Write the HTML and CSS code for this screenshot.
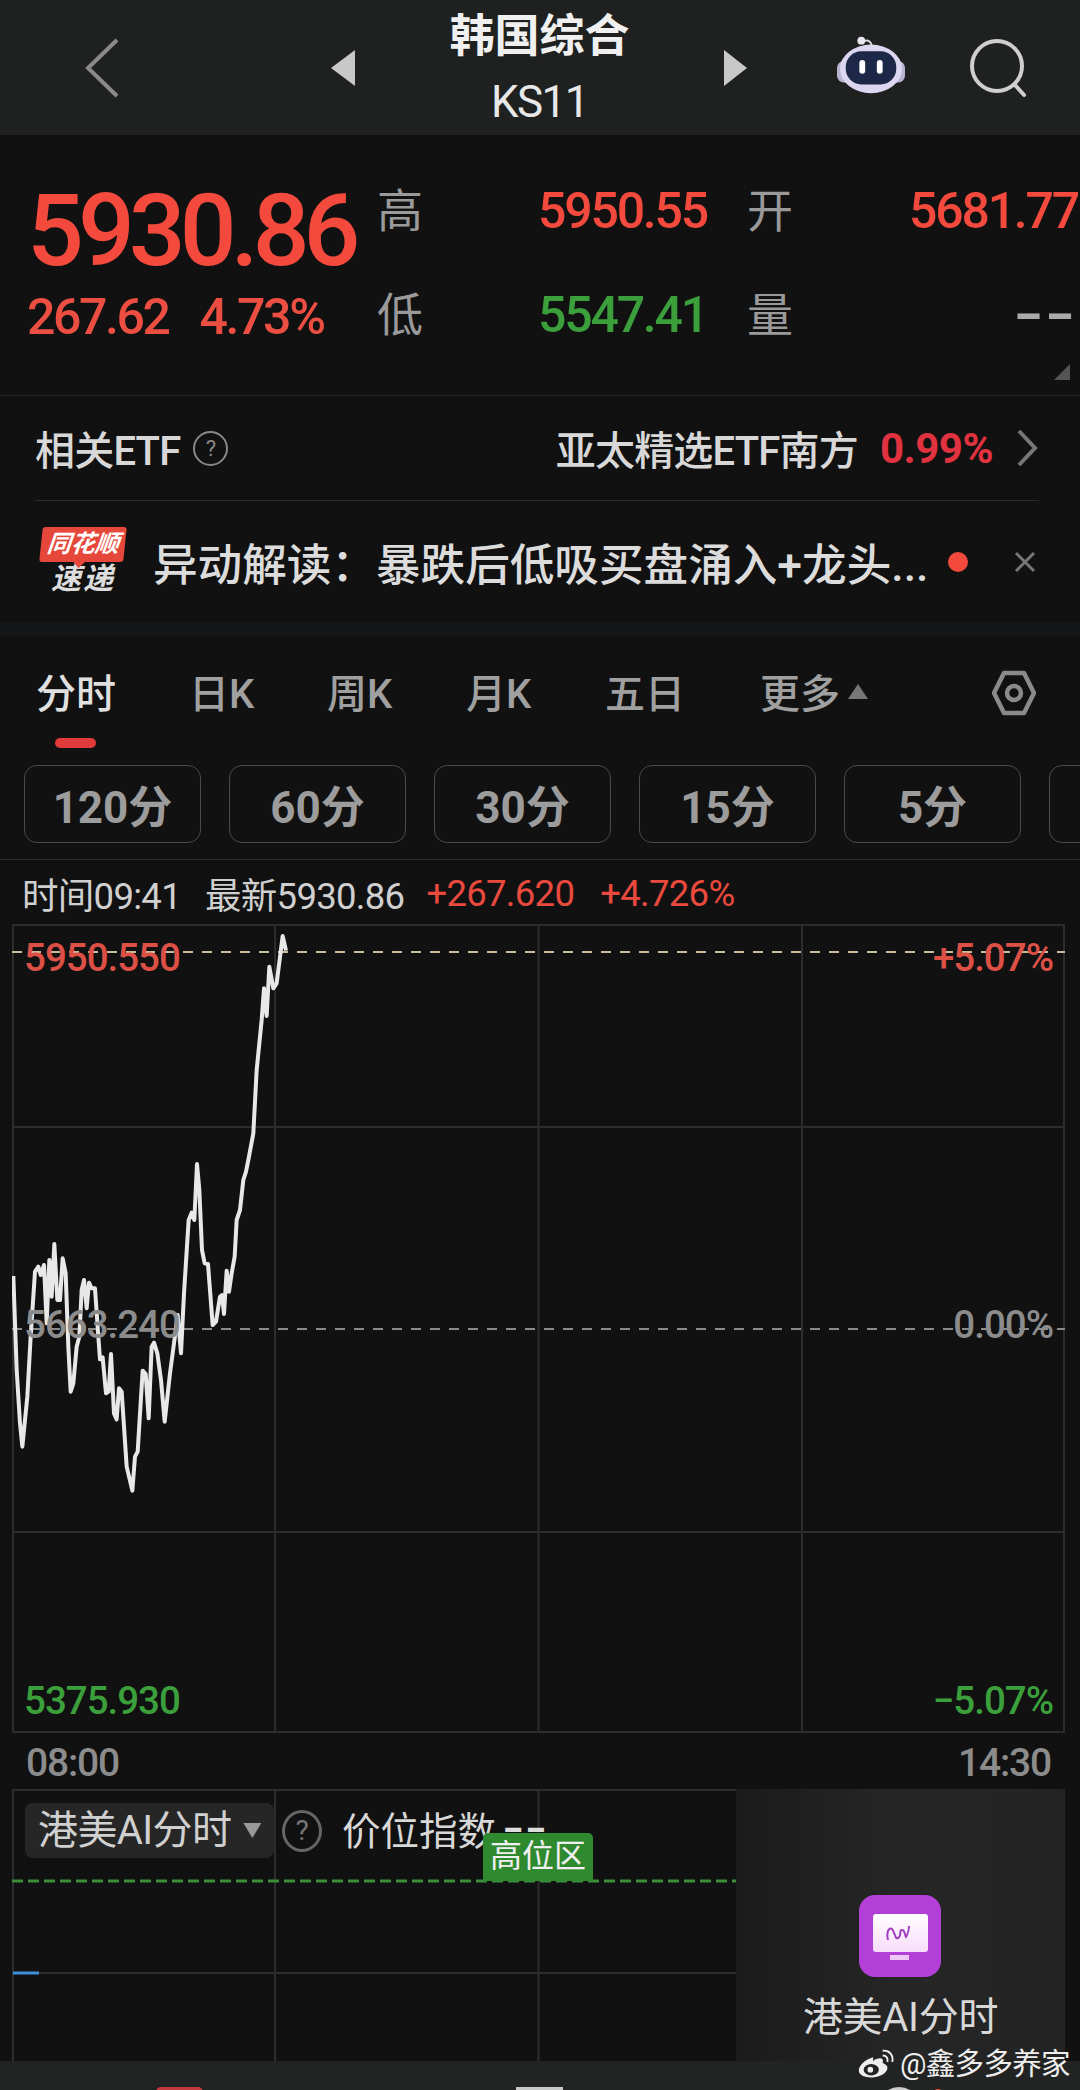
FILE: index.html
```html
<!DOCTYPE html>
<html lang="zh">
<head>
<meta charset="utf-8">
<title>韩国综合 KS11</title>
<link rel="stylesheet" href="styles.css">
</head>
<body>
<div class="page">
  <header class="topbar">
    <svg class="back" viewBox="0 0 34 60"><path d="M32 2 3 30l29 28"/></svg>
    <span class="tri tri-left"></span>
    <div class="title">
      <div class="title-name">韩国综合</div>
      <div class="title-code">KS11</div>
    </div>
    <span class="tri tri-right"></span>
    <svg class="robot" viewBox="0 0 70 62">
      <path d="M27 8c5-3 9 0 9 7" fill="none" stroke="#ddd" stroke-width="2"/>
      <circle cx="25" cy="7" r="4" fill="#e8e6f0"/>
      <rect x="0" y="28" width="70" height="22" rx="7" fill="#b9b5d0"/>
      <ellipse cx="35" cy="36" rx="32" ry="25" fill="#dcd6f0"/>
      <rect x="9" y="18" width="52" height="34" rx="16" fill="#1d2748"/>
      <rect x="23" y="27" width="6" height="14" rx="3" fill="#fff"/>
      <rect x="41" y="27" width="6" height="14" rx="3" fill="#fff"/>
    </svg>
    <svg class="search" viewBox="0 0 60 60"><circle cx="27" cy="27" r="25"/><path d="M45 46l9 10"/></svg>
  </header>

  <section class="quote">
    <div class="quote-main">
      <div class="price">5930.86</div>
      <div class="change"><span>267.62</span><span>4.73%</span></div>
    </div>
    <div class="stats">
      <span class="stat-label">高</span><span class="stat-val up">5950.55</span>
      <span class="stat-label">开</span><span class="stat-val up end">5681.77</span>
      <span class="stat-label">低</span><span class="stat-val down">5547.41</span>
      <span class="stat-label">量</span><span class="stat-val end muted">--</span>
    </div>
    <span class="corner"></span>
  </section>

  <section class="etf">
    <span class="etf-title">相关ETF</span>
    <span class="help-small">?</span>
    <span class="etf-name">亚太精选ETF南方</span>
    <span class="etf-pct">0.99%</span>
    <svg class="chev" viewBox="0 0 22 38"><path d="M3 2l16 17L3 36"/></svg>
  </section>

  <section class="news">
    <div class="logo">
      <div class="logo-box">同花顺</div>
      <div class="logo-text">速递</div>
    </div>
    <div class="headline">异动解读：暴跌后低吸买盘涌入+龙头...</div>
    <span class="dot"></span>
    <svg class="close" viewBox="0 0 22 22"><path d="M2 2l18 18M20 2 2 20"/></svg>
  </section>

  <div class="band"></div>

  <nav class="tabs">
    <span class="tab active">分时</span>
    <span class="tab">日K</span>
    <span class="tab">周K</span>
    <span class="tab">月K</span>
    <span class="tab">五日</span>
    <span class="tab tab-more">更多<i class="up-tri"></i></span>
    <svg class="hex" viewBox="0 0 44 46"><path d="M12 3h20l10 20-10 20H12L2 23z"/><circle cx="22" cy="23" r="7"/></svg>
  </nav>

  <div class="chips">
    <span class="chip">120分</span>
    <span class="chip">60分</span>
    <span class="chip">30分</span>
    <span class="chip">15分</span>
    <span class="chip">5分</span>
    <span class="chip"></span>
  </div>

  <div class="info">
    <span class="info-time">时间09:41</span>
    <span class="info-last">最新5930.86</span>
    <span class="info-up first">+267.620</span>
    <span class="info-up second">+4.726%</span>
  </div>

  <div class="chart">
    <svg class="chart-svg" viewBox="0 0 1053 809">
      <g class="grid">
        <path d="M1 1H1052V808H1M1 1V808"/>
        <path d="M0 203H1053M0 608H1053M263 0V809M526.5 0V809M790 0V809"/>
      </g>
      <path class="dash-high" d="M0 28H1053"/>
      <path class="dash-base" d="M0 405H1053"/>
      <polyline class="line" transform="translate(-12 226) scale(.33333)" points="40,378 50,660 60,820 67,890 82,740 92,560 105,365 115,350 122,375 132,345 140,520 148,330 155,440 163,282 172,450 180,450 188,325 197,370 205,590 212,725 220,700 230,590 238,560 245,420 252,390 260,475 267,398 275,415 285,415 295,560 300,628 308,622 318,730 326,725 333,612 342,790 350,808 357,715 365,725 380,950 397,1022 405,920 413,905 428,662 437,672 446,805 455,590 462,578 472,610 483,690 494,815 510,670 522,580 533,495 543,610 552,430 566,210 575,188 583,210 591,42 598,120 606,300 614,340 624,342 638,525 648,515 660,440 666,435 672,492 680,362 687,425 695,370 704,320 710,210 720,180 730,90 738,65 745,30 760,-50 770,-240 785,-390 792,-485 800,-402 808,-550 820,-485 830,-500 848,-642 858,-598"/>
    </svg>
    <span class="axis left top up-soft">5950.550</span>
    <span class="axis right top up-soft">+5.07%</span>
    <span class="axis left mid grey">5663.240</span>
    <span class="axis right mid grey">0.00%</span>
    <span class="axis left bot down">5375.930</span>
    <span class="axis right bot down">−5.07%</span>
  </div>

  <div class="times"><span>08:00</span><span>14:30</span></div>

  <div class="sub">
    <div class="sub-chart">
      <svg class="sub-svg" viewBox="0 0 724 272">
        <path class="grid-line" d="M1 0V272M263 0V272M526.5 0V272M0 1H724M0 184H724"/>
        <path class="dash-green" d="M0 92H724"/>
        <path class="blue" d="M1 184H27"/>
      </svg>
      <div class="sub-head">
        <span class="select">港美AI分时<i class="down-tri"></i></span>
        <span class="help-big">?</span>
        <span class="sub-label">价位指数<span class="sub-dash">--</span></span>
      </div>
      <span class="tag">高位区</span>
    </div>
    <aside class="promo">
      <svg class="promo-icon" viewBox="0 0 82 82">
        <defs>
          <linearGradient id="screen" x1="0" y1="0" x2="0" y2="1">
            <stop offset="0" stop-color="#ffffff"/>
            <stop offset="1" stop-color="#f8dcfa"/>
          </linearGradient>
        </defs>
        <rect width="82" height="82" rx="16" fill="#b13fd8"/>
        <rect x="14" y="19" width="55" height="38" rx="3" fill="url(#screen)"/>
        <rect x="31" y="60" width="19" height="5" fill="#f0c8f5"/>
        <path d="M29 45c-2-8 1-13 4-11 3 3 3 11 6 9 4-2 1-9 4-8 3 0 3 6 4 7 2-3 3-9 3-11" fill="none" stroke="#a040c0" stroke-width="2"/>
      </svg>
      <div class="promo-text">港美AI分时</div>
    </aside>
  </div>

  <footer class="bottom">
    <span class="b-red"></span>
    <span class="b-grey"></span>
    <span class="b-circle"></span>
    <span class="b-dot"></span>
  </footer>

  <div class="watermark">
    <svg class="weibo" viewBox="0 0 40 32">
      <path d="M17 9C9 11 1 18 2 24c1 5 9 7 16 6 8-1 14-5 14-10 0-3-3-4-5-5 1-3 0-5-3-5-2 0-5 1-7 3z" fill="#eee"/>
      <ellipse cx="15" cy="22" rx="8" ry="6" fill="#222"/>
      <circle cx="14" cy="22" r="3" fill="#eee"/>
      <path d="M27 7c4 0 6 3 5 7M27 2c7-1 12 5 10 12" fill="none" stroke="#eee" stroke-width="2"/>
    </svg>
    <span>@鑫多多养家</span>
  </div>
</div>
</body>
</html>
```

FILE: styles.css
```css
* { box-sizing: border-box; }
html, body { margin: 0; padding: 0; background: #111112; }
body { font-family: Roboto, "Noto Sans CJK SC", sans-serif; color: #ddd; }
.page { position: relative; width: 1080px; height: 2090px; overflow: hidden; background: #111112; }

/* top bar */
.topbar { position: relative; height: 135px; background: #1f2121; display: flex; align-items: center; }
.back { width: 34px; height: 60px; margin-left: 85px; fill: none; stroke: #8a8a8a; stroke-width: 4; }
.tri { width: 0; height: 0; border-top: 18px solid transparent; border-bottom: 18px solid transparent; }
.tri-left { margin-left: 212px; border-right: 24px solid #c8c8c8; }
.tri-right { border-left: 23px solid #c8c8c8; }
.title { width: 369px; text-align: center; color: #f0f0f0; }
.title-name { font-size: 45px; font-weight: 700; line-height: 62px; height: 65px; margin-top: 3px; }
.title-code { font-size: 44px; line-height: 62px; letter-spacing: -1.5px; color: #e8e8e8; }
.robot { width: 68px; height: 62px; margin-left: 90px; margin-top: -8px; }
.search { width: 60px; height: 60px; margin-left: 65px; margin-top: 2px; fill: none; stroke: #cfcfcf; stroke-width: 4; stroke-linecap: round; }

/* quote */
.quote { position: relative; height: 261px; display: flex; border-bottom: 1px solid #262626; }
.quote-main { width: 377px; padding: 46px 0 0 27px; color: #f44a3d; }
.price { font-size: 100px; font-weight: 500; line-height: 100px; letter-spacing: -5.9px; height: 106px; }
.change { font-size: 50px; font-weight: 500; line-height: 60px; letter-spacing: -2.4px; display: flex; gap: 31px; color: #ec4f42; }
.stats { display: grid; grid-template-columns: 161px 209px 162px 167px; grid-auto-rows: 104px; padding-top: 24px; align-items: center; }
.stat-label { font-size: 46px; color: #9a9a9a; line-height: 60px; }
.stat-val { font-size: 50px; font-weight: 500; line-height: 60px; letter-spacing: -2.2px; white-space: nowrap; }
.stat-val.up { color: #f44a3d; }
.stat-val.down { color: #3ba03b; }
.stat-val.end { text-align: right; }
.stat-val.muted { color: #aaa; font-weight: 700; letter-spacing: 0; transform: scaleX(1.6); transform-origin: right center; }
.corner { position: absolute; right: 10px; bottom: 15px; width: 16px; height: 16px; background: #555; clip-path: polygon(100% 0, 100% 100%, 0 100%); }

/* etf */
.etf { height: 105px; margin: 0 41px 0 35px; display: flex; align-items: center; border-bottom: 1px solid #2c2c2c; font-size: 40px; }
.etf-title { font-weight: 500; color: #d8d8d8; letter-spacing: -.8px; }
.help-small { width: 35px; height: 35px; margin-left: 13px; border: 2px solid #888; border-radius: 50%; font-size: 22px; line-height: 31px; text-align: center; color: #888; }
.etf-name { margin-left: auto; font-weight: 500; color: #d8d8d8; letter-spacing: -.8px; }
.etf-pct { margin-left: 22px; font-size: 42px; font-weight: 700; color: #e0323f; letter-spacing: -.5px; }
.chev { width: 22px; height: 38px; margin-left: 23px; margin-right: 1px; fill: none; stroke: #777; stroke-width: 4; }

/* news */
.news { height: 121px; display: flex; align-items: center; background: #111112; }
.logo { width: 84px; margin-left: 41px; text-align: center; }
.logo-box { position: relative; height: 35px; background: #e5483a; border-radius: 3px; transform: skewX(-6deg); color: #fff; font-size: 24px; font-weight: 700; font-style: italic; line-height: 34px; }
.logo-box::after { content: ""; position: absolute; left: 34px; bottom: -6px; width: 12px; height: 12px; background: #e5483a; transform: rotate(45deg) scale(.7); }
.logo-text { font-size: 30px; font-weight: 700; font-style: italic; line-height: 34px; color: #ddd; letter-spacing: 2px; }
.headline { margin-left: 28px; width: 790px; font-size: 44.6px; font-weight: 500; color: #dcdcdc; white-space: nowrap; letter-spacing: 0; }
.dot { width: 20px; height: 20px; margin-left: 5px; border-radius: 50%; background: #f44a3d; }
.close { width: 22px; height: 22px; margin-left: 46px; fill: none; stroke: #777; stroke-width: 3; }

.band { height: 14px; background: #151617; }

/* tabs */
.tabs { height: 111px; padding: 34px 0 0 36px; display: grid; grid-template-columns: 153px 138px 139px 139px 155px 232px 44px; align-items: start; }
.tab { position: relative; font-size: 40px; line-height: 50px; font-weight: 500; color: #a0a0a0; white-space: nowrap; }
.tab.active { color: #e0e0e0; }
.tab.active::after { content: ""; position: absolute; left: 19px; top: 68px; width: 41px; height: 10px; border-radius: 5px; background: #e03a3a; }
.up-tri { display: inline-block; margin-left: 8px; vertical-align: 9px; width: 20px; height: 15px; background: #777; clip-path: polygon(50% 0, 100% 100%, 0 100%); }
.hex { width: 44px; height: 46px; fill: none; stroke: #8a8a8a; stroke-width: 4.5; stroke-linejoin: round; }

/* chips */
.chips { height: 113px; padding: 18px 0 17px 24px; display: flex; gap: 28px; border-bottom: 1px solid #2c2c2c; overflow: hidden; }
.chip { flex: 0 0 177px; height: 78px; border: 1px solid #4a4a4a; border-radius: 13px; display: flex; align-items: center; justify-content: center; font-size: 44px; font-weight: 700; color: #9c9c9c; }

/* info */
.info { height: 64px; padding: 3px 0 0 22px; display: flex; align-items: center; font-size: 36.5px; letter-spacing: -.7px; color: #d0d0d0; white-space: nowrap; }
.info-last { margin-left: 24px; }
.info-up { color: #ea4a3e; }
.info-up.first { margin-left: 22px; }
.info-up.second { margin-left: 26px; }

/* chart */
.chart { position: relative; width: 1053px; height: 809px; margin-left: 12px; }
.chart-svg { display: block; width: 1053px; height: 809px; }
.grid path { fill: none; stroke: #2d2d2d; stroke-width: 2; }
.dash-high { stroke: #c9bc9a; stroke-width: 2; stroke-dasharray: 10 9; }
.dash-base { stroke: #8a8a8a; stroke-width: 2; stroke-dasharray: 10 9; }
.line { fill: none; stroke: #e8e8e8; stroke-width: 12; stroke-linejoin: round; }
.axis { position: absolute; font-size: 38.5px; font-weight: 500; line-height: 44px; letter-spacing: -1px; }
.axis.left { left: 12px; }
.axis.right { right: 12px; }
.axis.top { top: 12px; }
.axis.mid { top: 379px; }
.axis.bot { top: 755px; }
.up-soft { color: #dd5046; }
.grey { color: #8c8c8c; }
.down { color: #3ba03b; }

/* times */
.times { height: 56px; padding: 4px 29px 0 26px; display: flex; justify-content: space-between; align-items: center; font-size: 39px; font-weight: 500; letter-spacing: -1.2px; color: #8c8c8c; }

/* sub chart */
.sub { height: 272px; margin-left: 12px; width: 1053px; display: flex; }
.sub-chart { position: relative; width: 724px; }
.sub-svg { position: absolute; left: 0; top: 0; width: 724px; height: 272px; }
.grid-line { fill: none; stroke: #2d2d2d; stroke-width: 2; }
.dash-green { stroke: #3b8f3b; stroke-width: 3; stroke-dasharray: 11 5; }
.blue { stroke: #3d8fd8; stroke-width: 3; }
.sub-head { position: relative; display: flex; align-items: center; padding: 14px 0 0 13px; }
.select { width: 249px; height: 55px; padding-left: 13px; border-radius: 8px; background: #262626; font-size: 40px; line-height: 54px; color: #d0d0d0; white-space: nowrap; letter-spacing: -.6px; display: flex; align-items: center; }
.down-tri { width: 18px; height: 15px; margin-left: 12px; background: #999; clip-path: polygon(0 0, 100% 0, 50% 100%); }
.help-big { width: 40px; height: 42px; margin-left: 8px; border: 3px solid #666; border-radius: 50%; font-size: 28px; line-height: 36px; text-align: center; color: #777; }
.sub-label { margin: -6px 0 0 20px; font-size: 38.5px; color: #d8d8d8; white-space: nowrap; }
.sub-dash { display: inline-block; margin-left: 6px; font-weight: 700; color: #ddd; transform: scaleX(1.5); transform-origin: left center; vertical-align: 3px; }
.tag { position: absolute; left: 471px; top: 44px; width: 110px; height: 48px; border-radius: 5px 5px 0 0; background: #2f8a2f; color: #f0f0f0; font-size: 32px; line-height: 46px; text-align: center; }
.promo { width: 329px; padding-top: 106px; background: linear-gradient(90deg, #1b1b1b, #262626 50%, #232323); text-align: center; }
.promo-icon { display: block; width: 82px; height: 82px; margin: 0 0 0 123px; }
.promo-text { margin-top: 16px; font-size: 40px; line-height: 50px; color: #d8d8d8; letter-spacing: -.3px; white-space: nowrap; }

/* bottom bar */
.bottom { height: 29px; padding-top: 26px; background: #222323; display: flex; align-items: flex-start; }
.b-red { width: 47px; height: 20px; margin-left: 156px; background: #c23a3f; border-radius: 5px 5px 0 0; }
.b-grey { width: 47px; height: 20px; margin-left: 313px; background: #c8c8c8; }
.b-circle { width: 42px; height: 42px; margin-left: 315px; border: 4px solid #ccc; border-radius: 50%; }
.b-dot { width: 12px; height: 12px; margin: 2px 0 0 12px; border-radius: 50%; background: #f44a3d; }

/* watermark */
.watermark { position: absolute; left: 857px; top: 2046px; display: flex; align-items: center; gap: 5px; font-size: 29.5px; line-height: 36px; color: #eee; white-space: nowrap; letter-spacing: -.7px; }
.weibo { width: 38px; height: 32px; }
```
